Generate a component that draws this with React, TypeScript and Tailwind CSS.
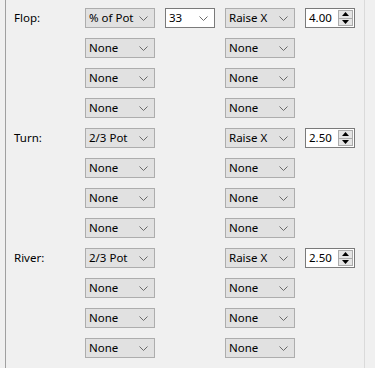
import React from "react";

type Row = {
    label?: string;
    action: string;
    amount?: string;
    raise: string;
    mult?: string;
};

const Chevron: React.FC = () => (
    <svg width="9" height="5" viewBox="0 0 9 5" className="shrink-0">
        <path d="M0.5 0.5 L4.5 4.5 L8.5 0.5" fill="none" stroke="#6a6a6a" strokeWidth="1" />
    </svg>
);

const Select: React.FC<{ value: string }> = ({ value }) => (
    <div className="w-[70px] h-5 flex items-center justify-between pl-[3px] pr-[6px] bg-[#e1e1e1] border border-[#adadad] text-black">
        <span className="leading-none">{value}</span>
        <Chevron />
    </div>
);

const Combo: React.FC<{ value: string }> = ({ value }) => (
    <div className="w-[50px] h-5 flex items-center justify-between pl-[3px] pr-[6px] bg-white border border-[#7a7a7a] text-black">
        <span className="leading-none">{value}</span>
        <Chevron />
    </div>
);

const Spin: React.FC<{ value: string }> = ({ value }) => (
    <div className="w-[50px] h-5 flex items-center justify-between pl-[3px] pr-px bg-white border border-[#7a7a7a] text-black">
        <span className="leading-none">{value}</span>
        <div className="w-[15px] h-4 flex flex-col border border-[#acacac] bg-[#e5e5e5]">
            <div className="flex-1 flex items-center justify-center border-b border-[#acacac]">
                <svg width="7" height="4" viewBox="0 0 7 4"><path d="M0 4 L3.5 0 L7 4 Z" fill="#000" /></svg>
            </div>
            <div className="flex-1 flex items-center justify-center">
                <svg width="7" height="4" viewBox="0 0 7 4"><path d="M0 0 L3.5 4 L7 0 Z" fill="#000" /></svg>
            </div>
        </div>
    </div>
);

const streets: { label: string; action: string; amount?: string; mult: string }[] = [
    { label: "Flop:", action: "% of Pot", amount: "33", mult: "4.00" },
    { label: "Turn:", action: "2/3 Pot", mult: "2.50" },
    { label: "River:", action: "2/3 Pot", mult: "2.50" },
];

const rows: Row[] = streets.flatMap((s) => [
    { label: s.label, action: s.action, amount: s.amount, raise: "Raise X", mult: s.mult },
    { action: "None", raise: "None" },
    { action: "None", raise: "None" },
    { action: "None", raise: "None" },
]);

export default function App() {
    return (
        <div
            className="w-[375px] h-[368px] bg-[#f0f0f0] pl-[5px] text-[11.5px] overflow-hidden"
            style={{ fontFamily: '"Noto Sans", "Liberation Sans", sans-serif' }}
        >
            <div className="w-[360px] h-full border-l border-l-[#a0a0a0] border-r border-r-[#dadada] flex flex-col gap-[10px] pt-2">
                {rows.map((row, i) => (
                    <div key={i} className="flex items-center gap-[10px] h-5">
                        <div className="w-[69px] pl-2 text-black">{row.label ?? ""}</div>
                        <Select value={row.action} />
                        {row.amount ? <Combo value={row.amount} /> : <div className="w-[50px]" />}
                        <Select value={row.raise} />
                        {row.mult ? <Spin value={row.mult} /> : null}
                    </div>
                ))}
            </div>
        </div>
    );
}
